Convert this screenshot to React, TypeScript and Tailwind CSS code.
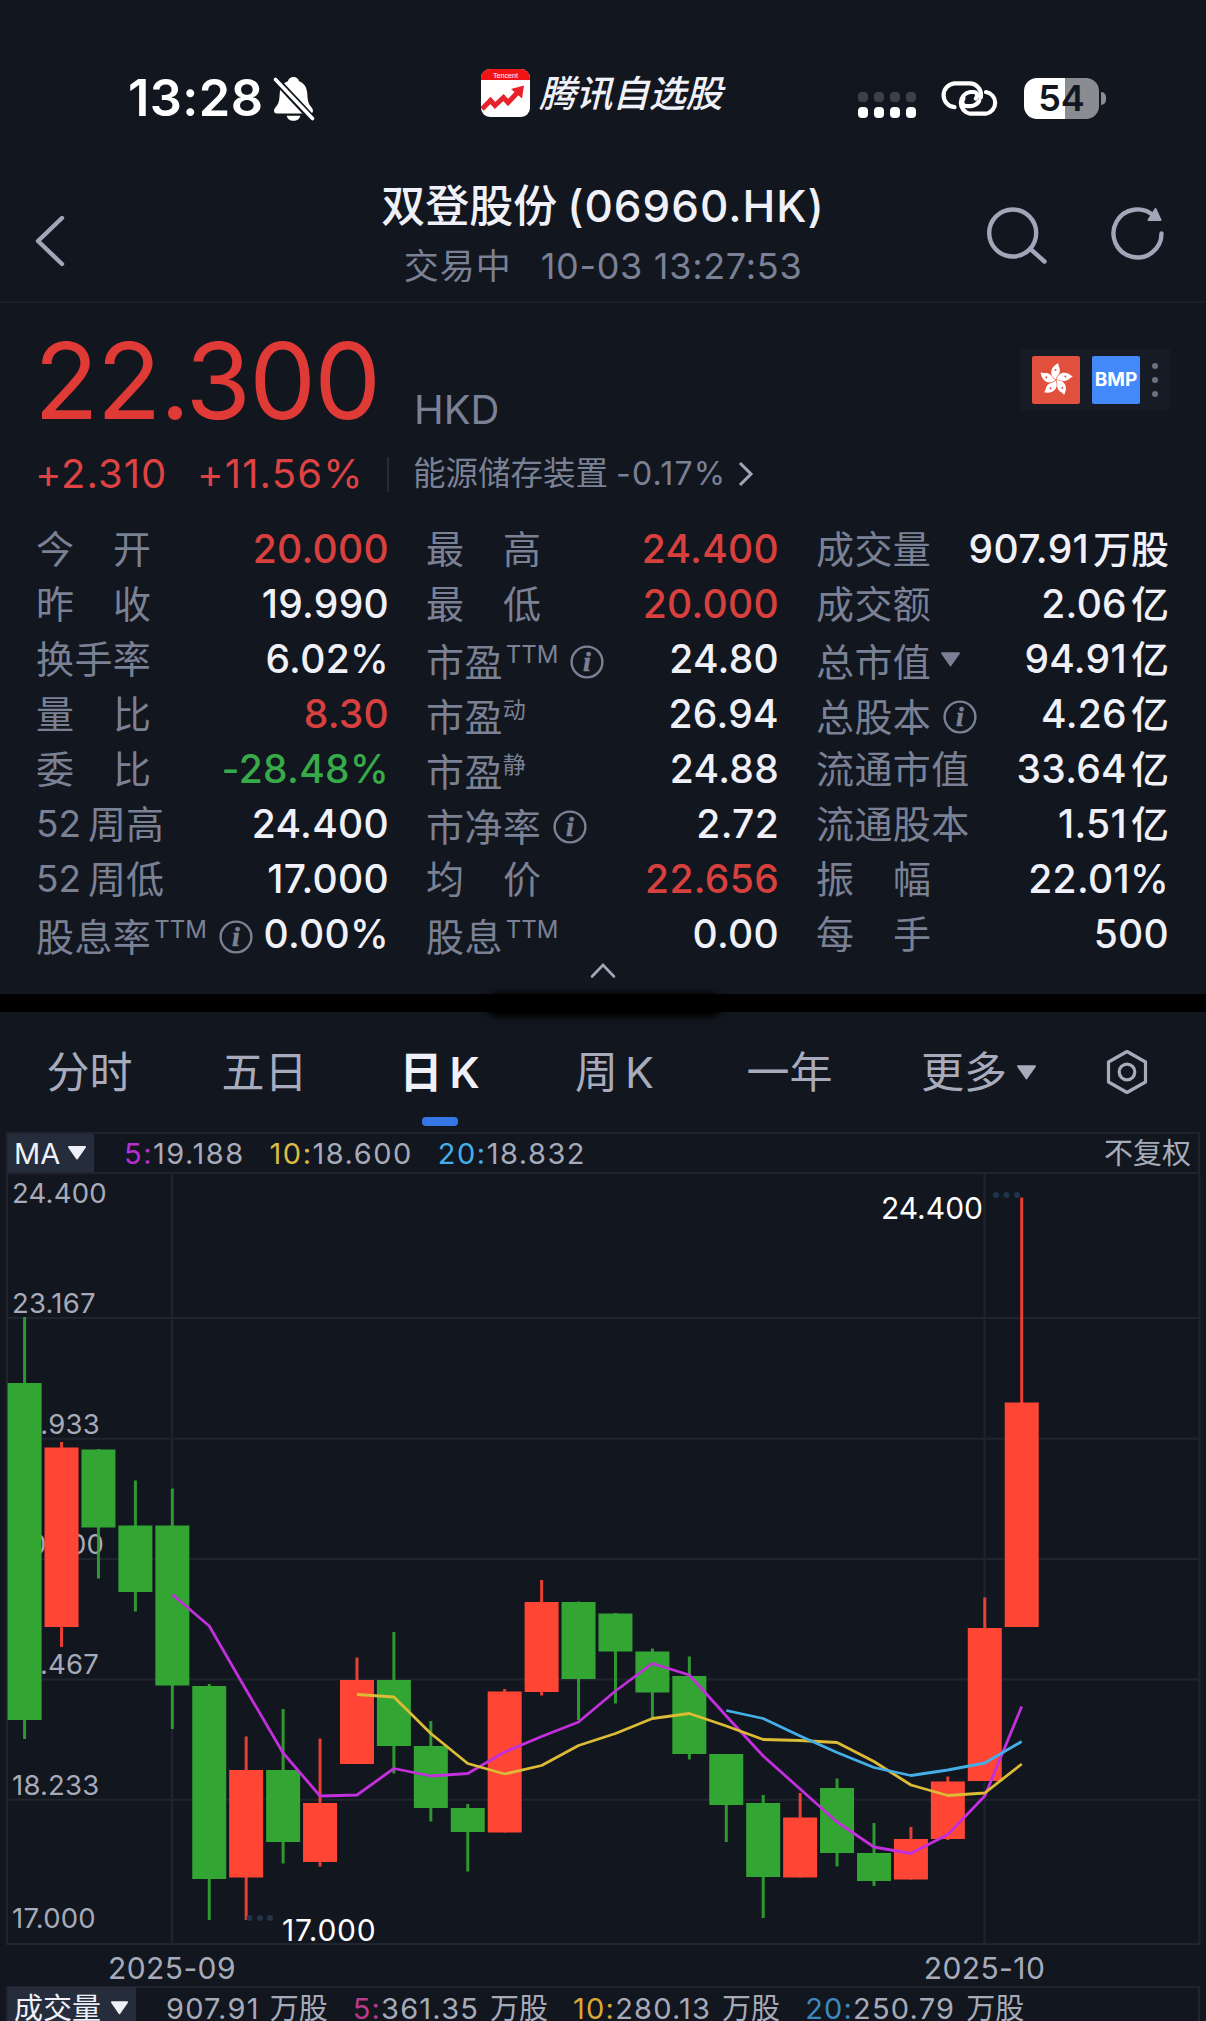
import React from 'react';

type Tone = 'up' | 'down' | 'flat';

interface Stat {
  label: string;
  value: string;
  unit?: string;
  sup?: string;
  info?: boolean;
  caret?: boolean;
  tone?: Tone;
}

// [direction, high, top, bottom, low] in plot coordinates
type Candle = ['up' | 'down', number, number, number, number];

const LEFT_STATS: Stat[] = [
  { label: '今开', value: '20.000', tone: 'up' },
  { label: '昨收', value: '19.990' },
  { label: '换手率', value: '6.02%' },
  { label: '量比', value: '8.30', tone: 'up' },
  { label: '委比', value: '-28.48%', tone: 'down' },
  { label: '52周高', value: '24.400' },
  { label: '52周低', value: '17.000' },
  { label: '股息率', value: '0.00%', sup: 'TTM', info: true },
];

const MIDDLE_STATS: Stat[] = [
  { label: '最高', value: '24.400', tone: 'up' },
  { label: '最低', value: '20.000', tone: 'up' },
  { label: '市盈', value: '24.80', sup: 'TTM', info: true },
  { label: '市盈', value: '26.94', sup: '动' },
  { label: '市盈', value: '24.88', sup: '静' },
  { label: '市净率', value: '2.72', info: true },
  { label: '均价', value: '22.656', tone: 'up' },
  { label: '股息', value: '0.00', sup: 'TTM' },
];

const RIGHT_STATS: Stat[] = [
  { label: '成交量', value: '907.91', unit: '万股' },
  { label: '成交额', value: '2.06', unit: '亿' },
  { label: '总市值', value: '94.91', unit: '亿', caret: true },
  { label: '总股本', value: '4.26', unit: '亿', info: true },
  { label: '流通市值', value: '33.64', unit: '亿' },
  { label: '流通股本', value: '1.51', unit: '亿' },
  { label: '振幅', value: '22.01%' },
  { label: '每手', value: '500' },
];

const TABS = ['分时', '五日', '日K', '周K', '一年'];

const CANDLES: Candle[] = [
  ['down', 1317, 1383, 1720, 1739],
  ['up', 1442, 1447.5, 1627, 1647],
  ['down', 1449, 1449.5, 1527.5, 1578.5],
  ['down', 1480.5, 1525.5, 1592, 1611.5],
  ['down', 1488.5, 1525.5, 1685.5, 1729],
  ['down', 1684, 1686, 1879, 1920],
  ['up', 1736.5, 1770, 1877.5, 1920],
  ['down', 1709, 1770, 1842, 1863.5],
  ['up', 1738.5, 1803, 1862, 1866.5],
  ['up', 1657.5, 1680, 1764, 1764],
  ['down', 1632, 1680, 1746, 1773.5],
  ['down', 1721, 1746, 1808, 1821.5],
  ['down', 1804, 1808, 1832, 1871.5],
  ['up', 1689, 1691.5, 1832.5, 1832.5],
  ['up', 1580, 1602, 1692, 1695.5],
  ['down', 1601.5, 1602, 1679, 1720],
  ['down', 1613, 1613.5, 1651.5, 1703.5],
  ['down', 1648.5, 1651.5, 1692.5, 1718],
  ['down', 1656.5, 1676, 1754, 1759.5],
  ['down', 1754, 1754, 1805, 1842],
  ['down', 1795, 1803, 1877, 1918],
  ['up', 1793, 1817.5, 1877.5, 1877.5],
  ['down', 1778.5, 1788, 1853, 1866.5],
  ['down', 1823, 1853, 1881, 1886],
  ['up', 1827, 1839, 1879.5, 1879.5],
  ['up', 1776.5, 1781.5, 1839, 1840],
  ['up', 1597.5, 1628, 1781, 1781],
  ['up', 1197.5, 1402.5, 1627, 1627],
];

const MA5 = [
  1594.5, 1626, 1690, 1753, 1796, 1795, 1768.5, 1776, 1773.5, 1752, 1736.5, 1722, 1691, 1663.5, 1675, 1716, 1756,
  1789, 1822, 1847, 1853.5, 1834.5, 1796, 1706.5,
];
const MA10 = [
  1694.5, 1697, 1733.5, 1763.5, 1774, 1765.5, 1745.5, 1733.5, 1718.5, 1713.5, 1726, 1739.5, 1740.5, 1742.5, 1761.5,
  1785, 1795.5, 1793, 1764,
];
const MA20 = [1710.5, 1718.5, 1736, 1752.5, 1767.5, 1775.5, 1770, 1763, 1741.5];

const PRICE_LABELS: [string, number][] = [
  ['24.400', 1203],
  ['23.167', 1313],
  ['21.933', 1434],
  ['20.700', 1554],
  ['19.467', 1674],
  ['18.233', 1795],
  ['17.000', 1928],
];

const candleX = (i: number) => 24.6 + i * 36.93;

// every average ends on the last candle
function maPoints(values: number[]): string {
  const offset = CANDLES.length - values.length;
  return values.map((y, i) => `${candleX(i + offset)},${y}`).join(' ');
}

function toneClass(tone: Tone = 'flat'): string {
  if (tone === 'up') return 'text-[#d8403e]';
  if (tone === 'down') return 'text-[#37ab49]';
  return 'text-[#f0f1f8]';
}

function Triangle({ className }: { className: string }) {
  return (
    <svg viewBox="0 0 20 14" className={className}>
      <path d="M2 1h16L10 12.5z" fill="currentColor" stroke="currentColor" strokeWidth="2" strokeLinejoin="round" />
    </svg>
  );
}

function InfoIcon() {
  return (
    <svg viewBox="0 0 34 34" className="h-[34px] w-[34px] shrink-0">
      <circle cx="17" cy="17" r="15.4" fill="none" stroke="currentColor" strokeWidth="2.4" />
      <text
        x="17"
        y="26"
        textAnchor="middle"
        fill="currentColor"
        stroke="currentColor"
        strokeWidth="0.6"
        fontFamily="Liberation Serif, serif"
        fontStyle="italic"
        fontWeight="700"
        fontSize="28"
      >
        i
      </text>
    </svg>
  );
}

function StatusBar() {
  return (
    <div className="flex h-[156px] shrink-0 pt-[69px] text-white">
      <div className="flex h-[58px] w-[481px] items-center pl-[128px]">
        <span className="w-[145px] text-[50.5px] leading-none font-semibold tracking-[0.4px]">13:28</span>
        <svg viewBox="0 0 42 46" className="h-[46px] w-[42px]">
          <path
            d="M20.5 2c3 0 5 1.800 5.600 4.300C31.500 8.300 34 13 34.300 19c.3 6 1 9.500 3.500 12.500 2.200 2.700 2.700 4.200 1.800 5.800-.5.800-1.300 1.200-2.400 1.200H3.800C1.900 38.500 1 37.200 1 35.700c0-2 1.700-3.400 3.300-5.700C6.300 27 6.400 23.500 6.700 19 7 13 9.500 8.300 14.900 6.300 15.500 3.800 17.500 2 20.500 2zM13.700 40.700h13.600c-.5 3-3.200 5-6.800 5s-6.300-2-6.800-5z"
            fill="white"
          />
          <path d="M3 5l36 38.500" stroke="#12161f" strokeWidth="7.4" />
          <path d="M2.500 4.500L39.500 43.500" stroke="white" strokeWidth="3.600" strokeLinecap="round" />
        </svg>
      </div>
      <div className="flex h-[48px] w-[377px] items-center gap-[9px]">
        <svg viewBox="0 0 49 48" className="h-[48px] w-[49px] shrink-0">
          <rect width="49" height="48" rx="9" fill="white" />
          <path d="M0 11V9a9 9 0 0 1 9-9h31a9 9 0 0 1 9 9v2z" fill="#f01414" />
          <text x="24.500" y="8.500" textAnchor="middle" fill="white" fontFamily="Liberation Sans, sans-serif" fontSize="7.200">
            Tencent
          </text>
          <path d="M1 40l8.500-8.500 4.500 5 8.500-8 4.500 5L37 23" fill="none" stroke="#e8222a" strokeWidth="5" />
          <path d="M30 20L43 16.500l-2 13z" fill="#e8222a" />
        </svg>
        <span className="text-[37px] leading-none font-medium tracking-[-0.4px] text-[#f0f1f8] italic">腾讯自选股</span>
      </div>
      <div className="flex h-[58px] items-center">
        <div className="mt-[14px] grid grid-cols-4 gap-x-[6px] gap-y-[5px]">
          {[0, 1, 2, 3].map((i) => (
            <i key={i} className="h-[10px] w-[10px] rounded-[4px] bg-[#3d4048]" />
          ))}
          {[0, 1, 2, 3].map((i) => (
            <i key={i} className="h-[11px] w-[10px] rounded-[4px] bg-white" />
          ))}
        </div>
        <svg viewBox="0 0 58 35" className="ml-[25px] h-[35px] w-[58px]" fill="none" stroke="white" strokeWidth="4.200" strokeLinecap="round">
          <path d="M13.500 26.200A12 12 0 0 1 13.500 2.300H29A11.500 11.500 0 0 1 30 25.200H26C20.500 25.200 20.300 20.500 22.500 17.500" strokeDasharray="71 4 100" />
          <path d="M45 11A11 11 0 0 1 45 32.700H29A11 11 0 0 1 29 11H32.500C36.500 11 37 15.500 34.800 17.500" />
        </svg>
        <div className="ml-[25px] flex items-center gap-[2px]">
          <div className="flex h-[41px] w-[75px] items-center justify-center rounded-[13px] bg-linear-to-r from-white from-55% to-[#8b8c92] to-55% text-[36px] leading-none font-semibold text-[#12161f]">
            54
          </div>
          <i className="h-[13px] w-[5px] rounded-r-full bg-[#8b8c92]" />
        </div>
      </div>
    </div>
  );
}

function Header() {
  return (
    <div className="flex h-[147px] shrink-0 border-b-2 border-[#1b1f29] text-[#a2a6b8]">
      <div className="w-[303px] pt-[59px] pl-[34px]">
        <svg viewBox="0 0 32 52" className="h-[52px] w-[32px]" fill="none" stroke="currentColor" strokeWidth="4.400" strokeLinecap="round" strokeLinejoin="round">
          <path d="M28 3L4 26l24 23" />
        </svg>
      </div>
      <div className="flex w-[600px] flex-col items-center pt-[27px]">
        <h1 className="flex gap-[10px] text-[44px] leading-[46px] font-medium text-[#f0f1f8]">
          <span>双登股份</span>
          <span className="tracking-[1px]">(06960.HK)</span>
        </h1>
        <div className="mt-[17px] flex text-[36px] leading-[40px] text-[#7b8195]">
          <span className="mr-[29px] text-[35px] tracking-[1px]">交易中</span>
          <span className="tracking-[0.7px]">10-03 13:27:53</span>
        </div>
      </div>
      <div className="flex pt-[50px] pl-[83px]">
        <svg viewBox="0 0 62 60" className="h-[60px] w-[62px]" fill="none" stroke="currentColor" strokeWidth="4.400" strokeLinecap="round">
          <circle cx="26.700" cy="27" r="23.500" />
          <path d="M45 43.500L58.500 55.500" />
        </svg>
        <svg viewBox="0 0 58 60" className="ml-[61px] h-[60px] w-[58px]" fill="none" stroke="currentColor" strokeWidth="4.400" strokeLinecap="round">
          <path d="M52.500 27.500A24 24 0 1 1 45 10" />
          <path d="M46.500 3L51.500 14H39.500z" fill="currentColor" strokeWidth="2" strokeLinejoin="round" />
        </svg>
      </div>
    </div>
  );
}

function HongKongBadge() {
  return (
    <svg viewBox="0 0 48 48" className="h-[48px] w-[48px]">
      <rect width="48" height="48" rx="2" fill="#e0503c" />
      {[0, 72, 144, 216, 288].map((angle) => (
        <g key={angle} transform={`rotate(${angle} 24 24)`}>
          <path d="M24 23.500C17 20 17.500 11 26.500 7c-1 3 2.500 5 1 9.500-.8 2.800-3 3.500-3.500 7z" fill="white" />
          <circle cx="23.500" cy="14" r="1" fill="#e0503c" />
        </g>
      ))}
    </svg>
  );
}

function Quote() {
  return (
    <div className="flex h-[194px] shrink-0 justify-between pr-[36px] pl-[34px]">
      <div>
        <div className="flex h-[128px] items-end">
          <span className="mb-[-2px] w-[380px] text-[106px] leading-[104px] tracking-[-1.800px] text-[#df3a36]">22.300</span>
          <span className="mb-[1px] text-[40px] leading-[40px] text-[#7b8195]">HKD</span>
        </div>
        <div className="mt-[23px] flex h-[40px] items-center text-[40px] leading-none text-[#dc4342]">
          <span className="w-[163px] pl-px tracking-[1px]">+2.310</span>
          <span className="w-[190px] tracking-[1.2px]">+11.56%</span>
          <i className="h-[35px] w-[2px] bg-[#272b37]" />
          <span className="ml-[24px] flex items-center text-[32.5px] text-[#7b8195]">
            <span>能源储存装置</span>
            <span className="ml-[8px] text-[32px] tracking-[1.2px]">-0.17%</span>
          </span>
          <svg viewBox="0 0 16 26" className="ml-[12px] h-[26px] w-[16px]" fill="none" stroke="#a2a6b8" strokeWidth="3">
            <path d="M2 2l11 11L2 24" />
          </svg>
        </div>
      </div>
      <div className="mt-[46px] flex h-[61px] w-[150px] items-center bg-[#171b26] pl-[12px]">
        <HongKongBadge />
        <div className="ml-[12px] flex h-[48px] w-[48px] items-center justify-center rounded-[2px] bg-[#4389fb] pt-[2px] text-[19px] font-bold text-white">
          BMP
        </div>
        <div className="ml-[12px] flex flex-col gap-[8px]">
          <i className="h-[6px] w-[6px] rounded-full bg-[#6c7080]" />
          <i className="h-[6px] w-[6px] rounded-full bg-[#6c7080]" />
          <i className="h-[6px] w-[6px] rounded-full bg-[#6c7080]" />
        </div>
      </div>
    </div>
  );
}

function StatLabel({ stat }: { stat: Stat }) {
  const spread = stat.label.length === 2 && !stat.sup;
  const lowered = stat.sup || stat.info || stat.caret;

  if (spread) {
    return (
      <span className="flex w-[115px] justify-between">
        <span>{stat.label[0]}</span>
        <span>{stat.label[1]}</span>
      </span>
    );
  }

  if (stat.label.startsWith('52')) {
    return (
      <span className="flex items-center">
        <span className="mr-[7px] text-[37px]">52</span>
        <span>{stat.label.slice(2)}</span>
      </span>
    );
  }

  return (
    <span className={`flex items-center ${lowered ? 'pt-[7px]' : ''}`}>
      <span className="tracking-[0.4px]">{stat.label}</span>
      {stat.sup === 'TTM' && <span className="ml-[3px] pb-[14px] text-[24px] leading-none">TTM</span>}
      {stat.sup && stat.sup !== 'TTM' && <span className="pb-[14px] text-[23px] leading-none">{stat.sup}</span>}
      {stat.caret && <Triangle className="mb-[6px] ml-[9px] h-[15px] w-[21px]" />}
      {stat.info && (
        <span className="ml-[12px]">
          <InfoIcon />
        </span>
      )}
    </span>
  );
}

function StatColumn({ stats, className }: { stats: Stat[]; className: string }) {
  return (
    <div className={className}>
      {stats.map((stat, i) => (
        <div key={i} className="flex h-[55px] items-center justify-between text-[38px] leading-none text-[#7b8195]">
          <StatLabel stat={stat} />
          <span className={`flex items-center text-[39px] font-[550] tracking-[0.3px] ${toneClass(stat.tone)}`}>
            {stat.value}
            {stat.unit && <span className="ml-[4px] text-[38px] font-medium tracking-normal">{stat.unit}</span>}
          </span>
        </div>
      ))}
    </div>
  );
}

function PeriodTabs() {
  return (
    <div className="flex h-[120px] shrink-0 text-[43px] leading-none text-[#a7abbc]">
      <div className="flex pl-[2px]">
        {TABS.map((tab) => {
          const active = tab === '日K';
          return (
            <div key={tab} className="flex w-[175px] flex-col items-center pt-[39px]">
              <span className={active ? 'h-[46px] font-semibold text-[#f0f1f8]' : 'h-[46px]'}>
                {tab.endsWith('K') ? (
                  <>
                    {tab[0]}
                    <span className="ml-[7px]">K</span>
                  </>
                ) : (
                  tab
                )}
              </span>
              {active && <i className="mt-[20px] h-[9px] w-[36px] rounded-[4px] bg-[#3577e6]" />}
            </div>
          );
        })}
      </div>
      <div className="flex w-[204px] justify-center pt-[39px]">
        更多
        <Triangle className="mt-[14px] ml-[9px] h-[15px] w-[21px]" />
      </div>
      <svg viewBox="0 0 42 46" className="mt-[37px] ml-[25px] h-[46px] w-[42px]" fill="none" stroke="currentColor" strokeWidth="3.200" strokeLinejoin="round">
        <path d="M21 2.500l18.500 10.500v20L21 43.500 2.500 33V13z" />
        <circle cx="21" cy="23" r="7.800" />
      </svg>
    </div>
  );
}

function Average({ period, value, unit, className }: { period: string; value: string; unit?: string; className: string }) {
  return (
    <span className="flex items-center">
      <span className={className}>{period}:</span>
      {value}
      {unit && <span className="ml-[11px] tracking-normal">{unit}</span>}
    </span>
  );
}

function CandleChart() {
  return (
    <svg viewBox="0 1174 1206 812" className="h-[812px] w-[1206px] shrink-0" fontFamily="Inter, sans-serif">
      <g stroke="#20242e" strokeWidth="2">
        <path d="M7 1174V1944H1199.500V1174" fill="none" />
        <path d="M172 1174V1944M984.500 1174V1944" />
        {[1318, 1438.700, 1559, 1679.500, 1799.700].map((y) => (
          <path key={y} d={`M7 ${y}H1199`} />
        ))}
      </g>

      <g fill="#a7abb9" fontSize="27.500" letterSpacing="0.2">
        {PRICE_LABELS.map(([label, y]) => (
          <text key={label} x="12" y={y}>
            {label}
          </text>
        ))}
      </g>

      {CANDLES.map(([direction, high, top, bottom, low], i) => {
        const x = candleX(i);
        const color = direction === 'up' ? '#ff4534' : '#33a532';
        return (
          <g key={i} fill={color}>
            <rect x={x - 1.5} y={high} width="3" height={low - high} opacity="0.9" />
            <rect x={x - 17} y={top} width="34" height={bottom - top} />
          </g>
        );
      })}

      <g fill="none" strokeWidth="2.800" strokeLinejoin="round">
        <polyline points={maPoints(MA5)} stroke="#c22fdc" />
        <polyline points={maPoints(MA10)} stroke="#dcbb35" />
        <polyline points={maPoints(MA20)} stroke="#45aee8" />
      </g>

      <g fill="#22344c">
        {[996, 1006.500, 1017].map((x) => (
          <circle key={x} cx={x} cy="1195" r="3" />
        ))}
        {[249.500, 260, 270].map((x) => (
          <circle key={x} cx={x} cy="1918" r="3" />
        ))}
      </g>
      <g fill="#ffffff" fontSize="30">
        <text x="983" y="1218.5" textAnchor="end">
          24.400
        </text>
        <text x="282" y="1940.5" letterSpacing="0.7">
          17.000
        </text>
      </g>
      <g fill="#a7abb9" fontSize="30" letterSpacing="0.4" textAnchor="middle">
        <text x="172" y="1978.5">2025-09</text>
        <text x="984.500" y="1978.5">2025-10</text>
      </g>
    </svg>
  );
}

export default function App() {
  return (
    <div className="flex h-[2021px] w-[1206px] flex-col overflow-hidden bg-[#12161f] font-['Inter','Noto_Sans_CJK_SC',sans-serif]">
      <StatusBar />
      <Header />
      <Quote />

      <div className="flex h-[497px] shrink-0 flex-col">
        <div className="flex pt-[24px] pl-[36px]">
          <StatColumn stats={LEFT_STATS} className="w-[353px]" />
          <StatColumn stats={MIDDLE_STATS} className="ml-[37px] w-[353px]" />
          <StatColumn stats={RIGHT_STATS} className="ml-[37px] w-[353px]" />
        </div>
        <svg viewBox="0 0 28 18" className="mx-auto h-[18px] w-[28px]" fill="none" stroke="#a2a6b8" strokeWidth="2.600" strokeLinecap="round">
          <path d="M3 15.500L14 4l11 11.500" />
        </svg>
      </div>

      <div className="relative h-[18px] shrink-0 bg-black">
        <div className="absolute top-[-1px] left-[488px] h-[24px] w-[232px] rounded-[8px] bg-black blur-[3px]" />
      </div>

      <PeriodTabs />

      <div className="mr-[6px] ml-[6px] flex h-[42px] shrink-0 items-center border-2 border-[#20242e] text-[29px] leading-none tracking-[1.5px] text-[#a7abb9]">
        <div className="flex h-full w-[86px] items-center bg-[#252d3d] pl-[6px] tracking-normal text-[#f0f1f8]">
          MA
          <Triangle className="ml-[7px] h-[14px] w-[20px]" />
        </div>
        <div className="ml-[30px] flex flex-1 gap-[25px]">
          <Average period="5" value="19.188" className="text-[#b62fd0]" />
          <Average period="10" value="18.600" className="text-[#dcbb45]" />
          <Average period="20" value="18.832" className="text-[#45aee8]" />
        </div>
        <span className="mr-[7px] tracking-normal">不复权</span>
      </div>

      <CandleChart />

      <div className="mr-[6px] ml-[6px] flex h-[42px] shrink-0 items-center border-2 border-b-0 border-[#20242e] text-[29px] leading-none tracking-[1.2px] text-[#a7abb9]">
        <div className="flex h-[42px] w-[128px] items-center bg-[#252d3d] pl-[6px] tracking-normal text-[#f0f1f8]">
          成交量
          <Triangle className="ml-[9px] h-[14px] w-[19px]" />
        </div>
        <div className="ml-[30px] flex gap-[25px]">
          <span className="flex">
            907.91<span className="ml-[10px] tracking-normal">万股</span>
          </span>
          <Average period="5" value="361.35" unit="万股" className="text-[#b93a8c]" />
          <Average period="10" value="280.13" unit="万股" className="text-[#d9a935]" />
          <Average period="20" value="250.79" unit="万股" className="text-[#3d88bd]" />
        </div>
      </div>
    </div>
  );
}
